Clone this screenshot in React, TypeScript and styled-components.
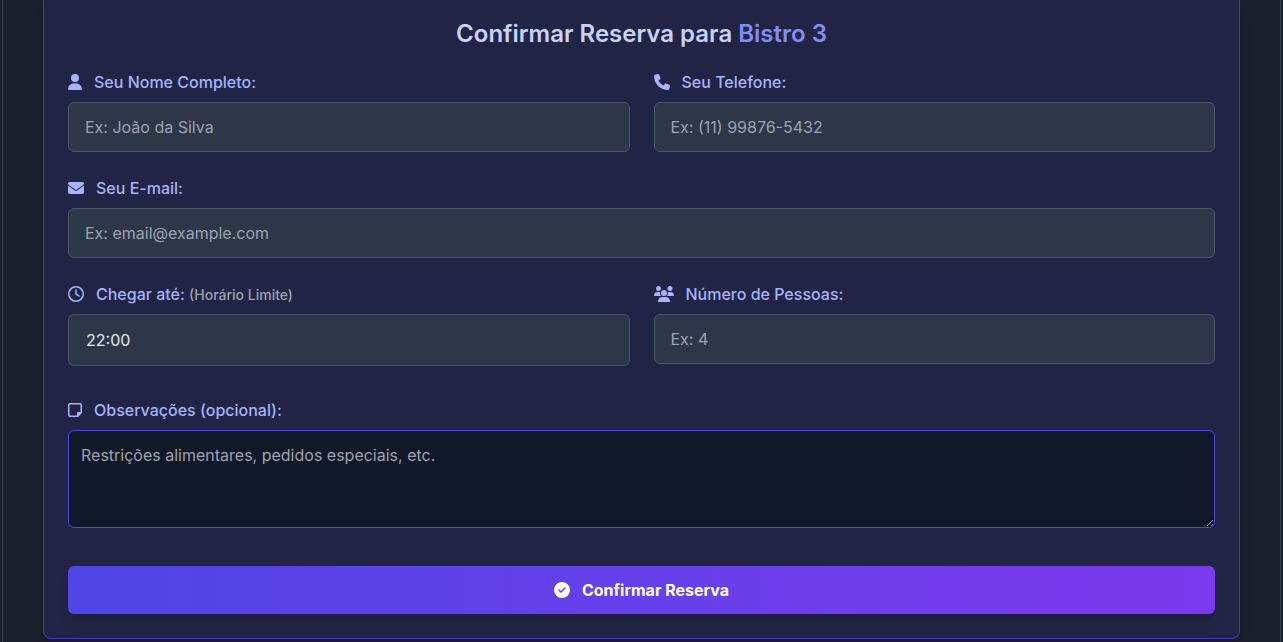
import React from "react";
import styled, { createGlobalStyle, css } from "styled-components";
import {
  FaUser,
  FaPhone,
  FaEnvelope,
  FaRegClock,
  FaUsers,
  FaRegNoteSticky,
  FaCircleCheck,
} from "react-icons/fa6";

const GlobalStyle = createGlobalStyle`
  *, *::before, *::after { box-sizing: border-box; }
  html { background: #17202b; }
  body {
    margin: 0;
    font-family: Inter, "Liberation Sans", sans-serif;
    font-size: 16px;
    line-height: 24px;
    color: #e2e8f0;
  }
`;

const Page = styled.main`
  margin: 0 2px;
  padding: 0 40px 3px;
  border: solid #374151;
  border-width: 0 1px;
  background: #1a202c;
`;

const Card = styled.section`
  padding: 18px 24px 24px;
  border: 1px solid #4338ca;
  border-top: 0;
  border-radius: 0 0 8px 8px;
  background: #222445;
  box-shadow: 0 10px 15px -3px rgba(0, 0, 0, 0.1), 0 4px 6px -4px rgba(0, 0, 0, 0.1);
`;

const Title = styled.h2`
  margin: 0 0 20px;
  font-size: 24px;
  line-height: 32px;
  font-weight: 600;
  text-align: center;
  color: #c7d2fe;
`;

const Accent = styled.span`
  color: #818cf8;
`;

const Form = styled.form`
  display: grid;
  grid-template-columns: 1fr 1fr;
  gap: 24px;
`;

const Field = styled.div<{ $wide?: boolean; $spaced?: boolean }>`
  display: flex;
  flex-direction: column;
  align-items: stretch;
  gap: 8px;
  ${(p) => p.$wide && css`grid-column: 1 / -1;`}
  ${(p) => p.$spaced && css`margin: 8px 0 14px;`}
`;

const Label = styled.label`
  display: flex;
  align-items: center;
  gap: 12px;
  font-weight: 500;
  color: #a5b4fc;
`;

/* Keeps each glyph at its own width for a 16px height. */
const Icon = styled.span<{ $width?: number }>`
  display: flex;
  flex: none;

  svg {
    width: ${(p) => p.$width ?? 16}px;
    height: 16px;
  }
`;

const Hint = styled.span`
  font-size: 14px;
  line-height: 20px;
  color: #9ca3af;
`;

const Input = styled.input<{ $time?: boolean }>`
  width: 100%;
  height: ${(p) => (p.$time ? 52 : 50)}px;
  padding: 0 ${(p) => (p.$time ? 17 : 16)}px;
  border: 1px solid #4a5568;
  border-radius: 6px;
  outline: none;
  background: #2d3748;
  color: #e2e8f0;
  font: inherit;

  &::placeholder {
    color: #9ca3af;
  }
`;

const TextArea = styled.textarea`
  display: block;
  width: 100%;
  height: 98px;
  padding: 12px;
  border: 1px solid #4f46e5;
  border-radius: 6px;
  outline: none;
  background: #111827;
  color: #e2e8f0;
  font: inherit;
  resize: vertical;

  &::placeholder {
    color: #9ca3af;
  }
`;

const SubmitButton = styled.button`
  grid-column: 1 / -1;
  display: flex;
  align-items: center;
  justify-content: center;
  gap: 12px;
  padding: 12px 24px;
  border: 0;
  border-radius: 6px;
  background: linear-gradient(to right, #4f46e5, #7c3aed);
  box-shadow: 0 10px 15px -3px rgba(0, 0, 0, 0.1), 0 4px 6px -4px rgba(0, 0, 0, 0.1);
  color: #ffffff;
  font: inherit;
  font-weight: 700;
  cursor: pointer;
`;

export default function App() {
  return (
    <>
      <GlobalStyle />
      <Page>
        <Card>
          <Title>
            Confirmar Reserva para <Accent>Bistro 3</Accent>
          </Title>
          <Form onSubmit={(e) => e.preventDefault()}>
            <Field>
              <Label htmlFor="nome">
                <Icon $width={14}><FaUser /></Icon>
                Seu Nome Completo:
              </Label>
              <Input id="nome" type="text" placeholder="Ex: João da Silva" />
            </Field>
            <Field>
              <Label htmlFor="telefone">
                <Icon><FaPhone /></Icon>
                Seu Telefone:
              </Label>
              <Input id="telefone" type="tel" placeholder="Ex: (11) 99876-5432" />
            </Field>
            <Field $wide>
              <Label htmlFor="email">
                <Icon><FaEnvelope /></Icon>
                Seu E-mail:
              </Label>
              <Input id="email" type="email" placeholder="Ex: email@example.com" />
            </Field>
            <Field>
              <Label htmlFor="horario">
                <Icon><FaRegClock /></Icon>
                <span>
                  Chegar até: <Hint>(Horário Limite)</Hint>
                </span>
              </Label>
              <Input id="horario" type="text" inputMode="numeric" defaultValue="22:00" $time />
            </Field>
            <Field>
              <Label htmlFor="pessoas">
                <Icon $width={20}><FaUsers /></Icon>
                Número de Pessoas:
              </Label>
              <Input id="pessoas" type="number" min={1} placeholder="Ex: 4" />
            </Field>
            <Field $wide $spaced>
              <Label htmlFor="observacoes">
                <Icon $width={14}><FaRegNoteSticky /></Icon>
                Observações (opcional):
              </Label>
              <TextArea
                id="observacoes"
                placeholder="Restrições alimentares, pedidos especiais, etc."
              />
            </Field>
            <SubmitButton type="submit">
              <Icon><FaCircleCheck /></Icon>
              Confirmar Reserva
            </SubmitButton>
          </Form>
        </Card>
      </Page>
    </>
  );
}
